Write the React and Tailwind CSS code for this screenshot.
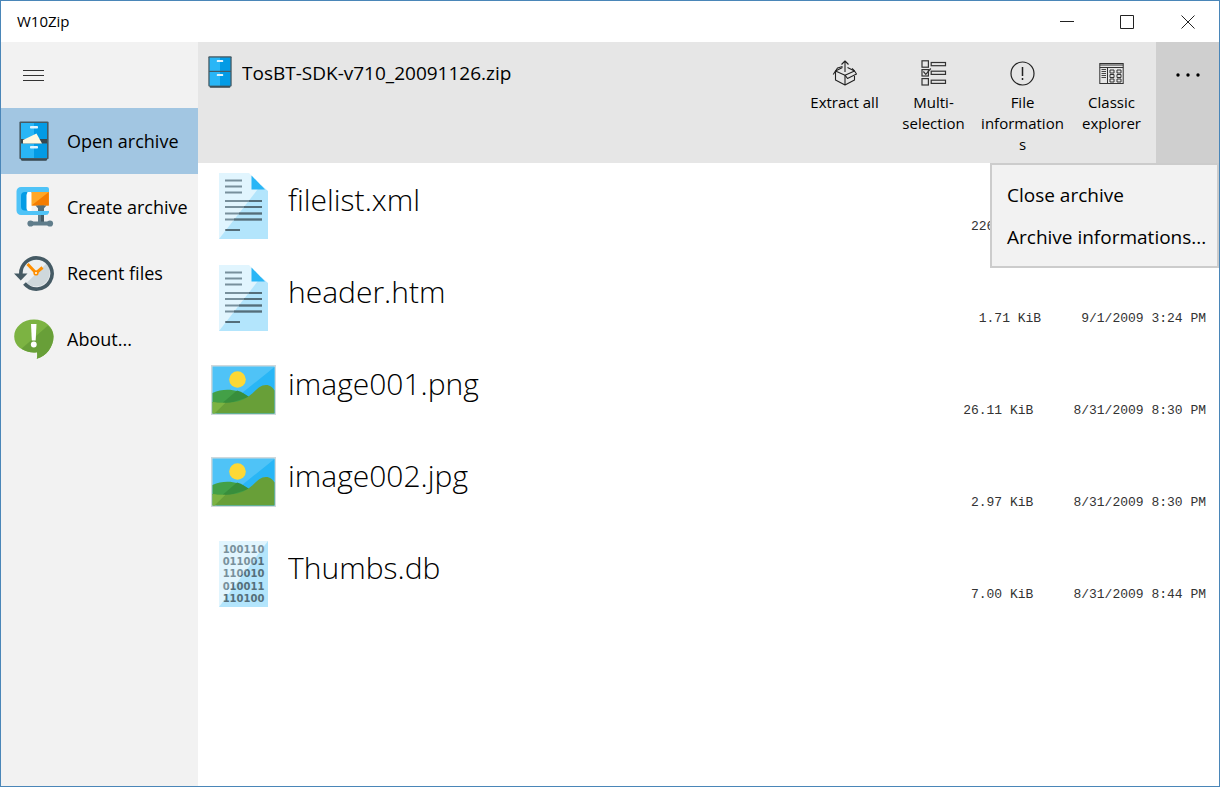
import React, { useState } from "react";

const CabinetIcon = ({ className, open = false }) => (
  <svg viewBox="0 0 30 40" className={className} aria-hidden="true">
    <path d="M2 37h26v1.5a1.2 1.2 0 0 1-1.2 1.2H3.200A1.200 1.200 0 0 1 2 38.500z" fill="#37474f" />
    <rect x="0.400" y="0.400" width="29.200" height="37.800" rx="1.200" fill="#455a64" />
    <rect x="2" y="2" width="13" height="16.500" fill="#29b6f6" />
    <rect x="15" y="2" width="13" height="16.500" fill="#039be5" />
    {open && <rect x="2" y="18" width="26" height="4.500" fill="#37474f" />}
    <rect x="2" y={open ? 22.5 : 20} width="13" height={open ? 14.5 : 17} fill="#29b6f6" />
    <rect x="15" y={open ? 22.5 : 20} width="13" height={open ? 14.5 : 17} fill="#039be5" />
    {open && <path d="M4 19 17.500 12.500 23 22.500H4z" fill="#fff8e1" />}
    <rect x="11" y="5" width="8" height="2.600" rx="0.800" fill="#e1f5fe" />
    <rect x="11" y={open ? 25 : 22.5} width="8" height="2.600" rx="0.800" fill="#e1f5fe" />
  </svg>
);

const ClampIcon = ({ className }) => (
  <svg viewBox="0 0 40 40" className={className} aria-hidden="true">
    <path d="M24 17h6v19h-6z" fill="#607d8b" />
    <path d="M27 17h3v19h-3z" fill="#455a64" />
    <path d="M16 34.500h20v4H16z" fill="#607d8b" />
    <circle cx="16.500" cy="36.500" r="3.100" fill="#607d8b" />
    <circle cx="36" cy="36.500" r="3.100" fill="#607d8b" />
    <path d="M7 0h26a2 2 0 0 1 2 2v4H13v18h22v1.500A3.500 3.500 0 0 1 31.500 28H7a4.500 4.500 0 0 1-4.500-4.500v-19A4.500 4.500 0 0 1 7 0z" fill="#4fc3f7" />
    <path d="M11 5h3v18.500h-3a4 4 0 0 1-4-4V9a4 4 0 0 1 4-4z" fill="#039be5" />
    <path d="M13.500 5h4v19h-2a3 3 0 0 1-3-3V8z" fill="#fff" />
    <path d="M17.500 5h17.300v13.500H17.500z" fill="#ffa726" />
    <path d="M34.800 5v13.500H17.500z" fill="#f57c00" />
    <path d="M21.500 18.500h11l-2.500 2.800v2.700h-6v-2.700z" fill="#546e7a" />
  </svg>
);

const RecentIcon = ({ className }) => (
  <svg viewBox="0 0 40 40" className={className} aria-hidden="true">
    <circle cx="22" cy="20" r="14" fill="#eceff1" />
    <path d="M32.500 10.500A14 14 0 0 1 12.500 30z" fill="#cfd8dc" />
    <path d="M7 22.500A15.600 15.600 0 1 1 10.500 30.500" fill="none" stroke="#455a64" strokeWidth="3.600" />
    <path d="M0 20.500h13.500L6.800 27.500z" fill="#455a64" />
    <path d="M13.500 11 22 20l6.500-5.500" fill="none" stroke="#ff8f00" strokeWidth="3" />
    <circle cx="22" cy="20" r="2.600" fill="#ff8f00" />
    <circle cx="22" cy="20" r="1" fill="#fff" />
  </svg>
);

const AboutIcon = ({ className }) => (
  <svg viewBox="0 0 40 40" className={className} aria-hidden="true">
    <path d="M20 0.500C9 0.500 0.200 8 0.200 17.500S8 32.500 20 33.500c1.500 0 3-.2 3-.2.500 2.500.3 4.700-.2 6.500C32 37.500 39.500 28 39.500 17.500 39.500 8 31 .5 20 .5z" fill="#7cb342" />
    <path d="M34 6.500c3.400 3 5.500 6.800 5.500 11 0 10.500-7.500 20-16.700 22.300.5-1.800.7-4 .2-6.500-6 .8-11-.6-15.500-3.500z" fill="#689f38" />
    <path d="M17 5h5.500l-.8 16.500h-3.900z" fill="#fff" />
    <circle cx="19.800" cy="25.500" r="2.900" fill="#fff" />
  </svg>
);

const DocumentIcon = ({ className }) => (
  <svg viewBox="0 0 66 66" className={className} aria-hidden="true">
    <path d="M8 0h30l19 19v47H8z" fill="#e1f5fe" />
    <path d="M57 18v48H8L50 12z" fill="#b3e5fc" />
    <path d="M40.500 2.500 54 16.500H40.500z" fill="#29b6f6" />
    <path d="M14 7.500h17M14 13.500h17M14 19.500h17M14 28h37" stroke="#78909c" strokeWidth="2" />
    <path d="M14 34h37M14 40.500h37M14 46.500h37M14 57h15" stroke="#78909c" strokeWidth="2" />
    <path d="M38 28h13M33 34h18M28 40.500h23M23 46.500h28M15 57h14" stroke="#546e7a" strokeWidth="2" />
  </svg>
);

const PictureIcon = ({ className }) => (
  <svg viewBox="0 0 66 66" className={className} aria-hidden="true">
    <rect x="0" y="8" width="65" height="50" fill="#cfd8dc" />
    <rect x="1.500" y="9.500" width="62" height="47" fill="#4fc3f7" />
    <path d="M63.500 10v46.500h-58z" fill="#29b6f6" />
    <circle cx="26.500" cy="22.500" r="8.300" fill="#fdd835" />
    <path d="M1.500 36C13 31 26 31.500 38 40L28 48 1.500 46z" fill="#43a047" />
    <path d="M26 33.500c4 1.200 8 3.500 12 6.500L14 47.500l-2-2z" fill="#388e3c" />
    <path d="M1.500 45c13 2 27 1 36-5.500C45 34 48 28 55 28c4 0 7 2.500 8.500 5.500v23h-62z" fill="#689f38" />
    <path d="M1.500 45c4 .7 8 1 13 .8L3.500 56.500h-2z" fill="#7cb342" />
  </svg>
);

const BinaryIcon = ({ className }) => (
  <svg viewBox="0 0 66 66" className={className} aria-hidden="true">
    <defs>
      <linearGradient id="bits" gradientUnits="userSpaceOnUse" x1="16" y1="16" x2="49" y2="49">
        <stop offset="0.500" stopColor="#78909c" />
        <stop offset="0.500" stopColor="#546e7a" />
      </linearGradient>
    </defs>
    <rect x="8" width="49" height="66" fill="#e1f5fe" />
    <path d="M57 0v66H8z" fill="#b3e5fc" />
    <g
      className="font-['DejaVu_Sans',sans-serif] text-[10px] font-bold"
      fill="url(#bits)"
      textAnchor="middle"
    >
      <text x="32.500" y="12">100110</text>
      <text x="32.500" y="24">011001</text>
      <text x="32.500" y="36">110010</text>
      <text x="32.500" y="49">010011</text>
      <text x="32.500" y="61">110100</text>
    </g>
  </svg>
);

const ExtractIcon = () => (
  <svg viewBox="0 0 26 26" className="size-[26px]" fill="none" stroke="#222" strokeWidth="1.100" strokeLinejoin="round" aria-hidden="true">
    <path d="M13 12V1M9.500 4.500 13 1l3.500 3.500" />
    <path d="M10.500 7.500 3.500 11 13 15.200 22.500 11l-7-3.500" />
    <path d="M3.500 11v9L13 25l9.500-5v-4M13 15.200V25" />
    <path d="M3.500 11 1.200 14.500M3.500 11l2-3 5-1.500M22.500 11l2 3-9 4.500-2.500-3.300M22.500 11 20 8.500" />
  </svg>
);

const MultiIcon = () => (
  <svg viewBox="0 0 26 26" className="size-[26px]" fill="none" stroke="#333" strokeWidth="1.200" aria-hidden="true">
    <rect x="1" y="0.800" width="6.400" height="6.400" />
    <rect x="1" y="9.600" width="6.400" height="6.400" />
    <rect x="1" y="18.600" width="6.400" height="6.400" />
    <rect x="10.200" y="2.500" width="14.300" height="3.200" />
    <rect x="10.200" y="11.200" width="14.300" height="3.200" />
    <rect x="10.200" y="20.200" width="14.300" height="3.200" />
    <path d="m2.400 11.500 2.400 2.800L9.800 8.500" />
  </svg>
);

const InfoIcon = () => (
  <svg viewBox="0 0 26 26" className="size-[26px]" fill="none" stroke="#222" aria-hidden="true">
    <circle cx="12.500" cy="13.500" r="11.500" strokeWidth="1.200" />
    <path d="M12.500 7v9M12.500 18v2" strokeWidth="1.500" />
  </svg>
);

const ExplorerIcon = () => (
  <svg viewBox="0 0 26 26" className="size-[26px]" fill="none" stroke="#333" aria-hidden="true">
    <rect x="0.800" y="3.500" width="23.400" height="20" />
    <path d="M.8 5h23.400M.8 7.500h23.400M8.500 7.500v16" />
    <path d="M2.500 9.500h4.500M2.500 11.500h4.500M2.500 13.500h4.500M2.500 15.500h4.500M2.500 17.500h4.500" strokeWidth="0.900" />
    <path d="M11 10h4v3h-4zM18 10h4v3h-4zM11 14.500h4v3h-4zM18 14.500h4v3h-4zM11 19h4v3h-4zM18 19h4v3h-4z" />
  </svg>
);

const navItems = [
  { id: "open", label: "Open archive", icon: <CabinetIcon open className="size-10" /> },
  { id: "create", label: "Create archive", icon: <ClampIcon className="size-10" /> },
  { id: "recent", label: "Recent files", icon: <RecentIcon className="size-10" /> },
  { id: "about", label: "About...", icon: <AboutIcon className="size-10" /> },
];

const commands = [
  { label: "Extract all", icon: <ExtractIcon /> },
  { label: "Multi-selection", icon: <MultiIcon /> },
  { label: "File informations", icon: <InfoIcon /> },
  { label: "Classic explorer", icon: <ExplorerIcon /> },
];

const files = [
  { name: "filelist.xml", size: "226.00 B", date: "8/31/2009 8:30 PM", Icon: DocumentIcon },
  { name: "header.htm", size: "1.71 KiB", date: "9/1/2009 3:24 PM", Icon: DocumentIcon },
  { name: "image001.png", size: "26.11 KiB", date: "8/31/2009 8:30 PM", Icon: PictureIcon },
  { name: "image002.jpg", size: "2.97 KiB", date: "8/31/2009 8:30 PM", Icon: PictureIcon },
  { name: "Thumbs.db", size: "7.00 KiB", date: "8/31/2009 8:44 PM", Icon: BinaryIcon },
];

const TitleBar = () => (
  <div className="flex h-[41px] items-center justify-between bg-white pl-4">
    <span className="text-[15px]">W10Zip</span>
    <div className="flex h-full">
      <button aria-label="Minimize" className="flex w-[60px] items-center justify-center">
        <svg viewBox="0 0 14 14" className="size-3.5" stroke="#222">
          <path d="M0 6.500h14" />
        </svg>
      </button>
      <button aria-label="Maximize" className="flex w-[60px] items-center justify-center">
        <svg viewBox="0 0 14 14" className="size-3.5" fill="none" stroke="#222">
          <path d="M.5.5h13v13H.5z" />
        </svg>
      </button>
      <button aria-label="Close" className="flex w-[62px] items-center justify-center">
        <svg viewBox="0 0 14 14" className="size-3.5" stroke="#222">
          <path d="m.5.5 13 13m0-13-13 13" />
        </svg>
      </button>
    </div>
  </div>
);

const Sidebar = ({ active, onSelect }) => (
  <nav className="w-[197px] shrink-0 bg-[#f2f2f2]">
    <button aria-label="Menu" className="flex h-[66px] w-full items-center pl-[22px]">
      <svg viewBox="0 0 21 11" className="h-[11px] w-[21px]" stroke="#333">
        <path d="M0 .5h21M0 5.500h21M0 10.500h21" />
      </svg>
    </button>
    {navItems.map((item) => (
      <button
        key={item.id}
        onClick={() => onSelect(item.id)}
        className={`flex h-[66px] w-full items-center gap-[13px] pl-[13px] text-left text-[18px] whitespace-nowrap ${
          active === item.id ? "bg-[#a2c6e2]" : "hover:bg-[#e6e6e6]"
        }`}
      >
        {item.icon}
        {item.label}
      </button>
    ))}
  </nav>
);

const Header = ({ menuOpen, onToggle }) => (
  <header className="relative flex min-h-[121px] bg-[#e6e6e6]">
    <div className="flex min-w-0 flex-1 items-start gap-2.5 pt-3.5 pl-2.5">
      <CabinetIcon className="h-8 w-6 shrink-0" />
      <h1 className="truncate text-[19px] leading-[34px]">TosBT-SDK-v710_20091126.zip</h1>
    </div>
    <div className="flex">
      {commands.map((cmd) => (
        <button
          key={cmd.label}
          className="flex w-[89px] flex-col items-center gap-1.5 px-0.5 pt-[18px] text-[15px] leading-[21px]"
        >
          {cmd.icon}
          <span className="w-full text-center wrap-break-word">{cmd.label}</span>
        </button>
      ))}
      <button
        aria-label="More"
        aria-expanded={menuOpen}
        onClick={onToggle}
        className={`flex w-[63px] justify-center pt-[31px] ${menuOpen ? "bg-[#cfcfcf]" : ""}`}
      >
        <svg viewBox="0 0 24 4" className="h-1 w-6" fill="#000">
          <circle cx="2" cy="2" r="1.700" />
          <circle cx="12" cy="2" r="1.700" />
          <circle cx="22" cy="2" r="1.700" />
        </svg>
      </button>
    </div>
    {menuOpen && (
      <div className="absolute top-full right-0 flex w-[229px] flex-col border-2 border-[#cccccc] bg-[#f2f2f2] pt-[9px] pb-2 text-[19px]">
        <button className="h-[42px] pl-[15px] text-left whitespace-nowrap">Close archive</button>
        <button className="h-[42px] pl-[15px] text-left whitespace-nowrap">Archive informations...</button>
      </div>
    )}
  </header>
);

const FileList = () => (
  <ul className="flex-1">
    {files.map(({ name, size, date, Icon }) => (
      <li key={name} className="flex h-[92px] items-start gap-[11px] pt-2.5 pr-[13px] pl-[13px]">
        <Icon className="size-[66px] shrink-0" />
        <span className="min-w-0 flex-1 truncate text-[30px] leading-[54px] font-light">{name}</span>
        <span className="flex gap-10 self-end pb-5 font-['Liberation_Mono',monospace] text-[13px] leading-4 text-[#333]">
          <span>{size}</span>
          <span>{date}</span>
        </span>
      </li>
    ))}
  </ul>
);

const App = () => {
  const [active, setActive] = useState("open");
  const [menuOpen, setMenuOpen] = useState(true);

  return (
    <div className="flex min-h-screen flex-col border border-[#4a86b8] bg-white font-['Open_Sans','Noto_Sans',sans-serif] text-black">
      <TitleBar />
      <div className="flex flex-1">
        <Sidebar active={active} onSelect={setActive} />
        <main className="flex min-w-0 flex-1 flex-col">
          <Header menuOpen={menuOpen} onToggle={() => setMenuOpen(!menuOpen)} />
          <FileList />
        </main>
      </div>
    </div>
  );
};

export default App;
